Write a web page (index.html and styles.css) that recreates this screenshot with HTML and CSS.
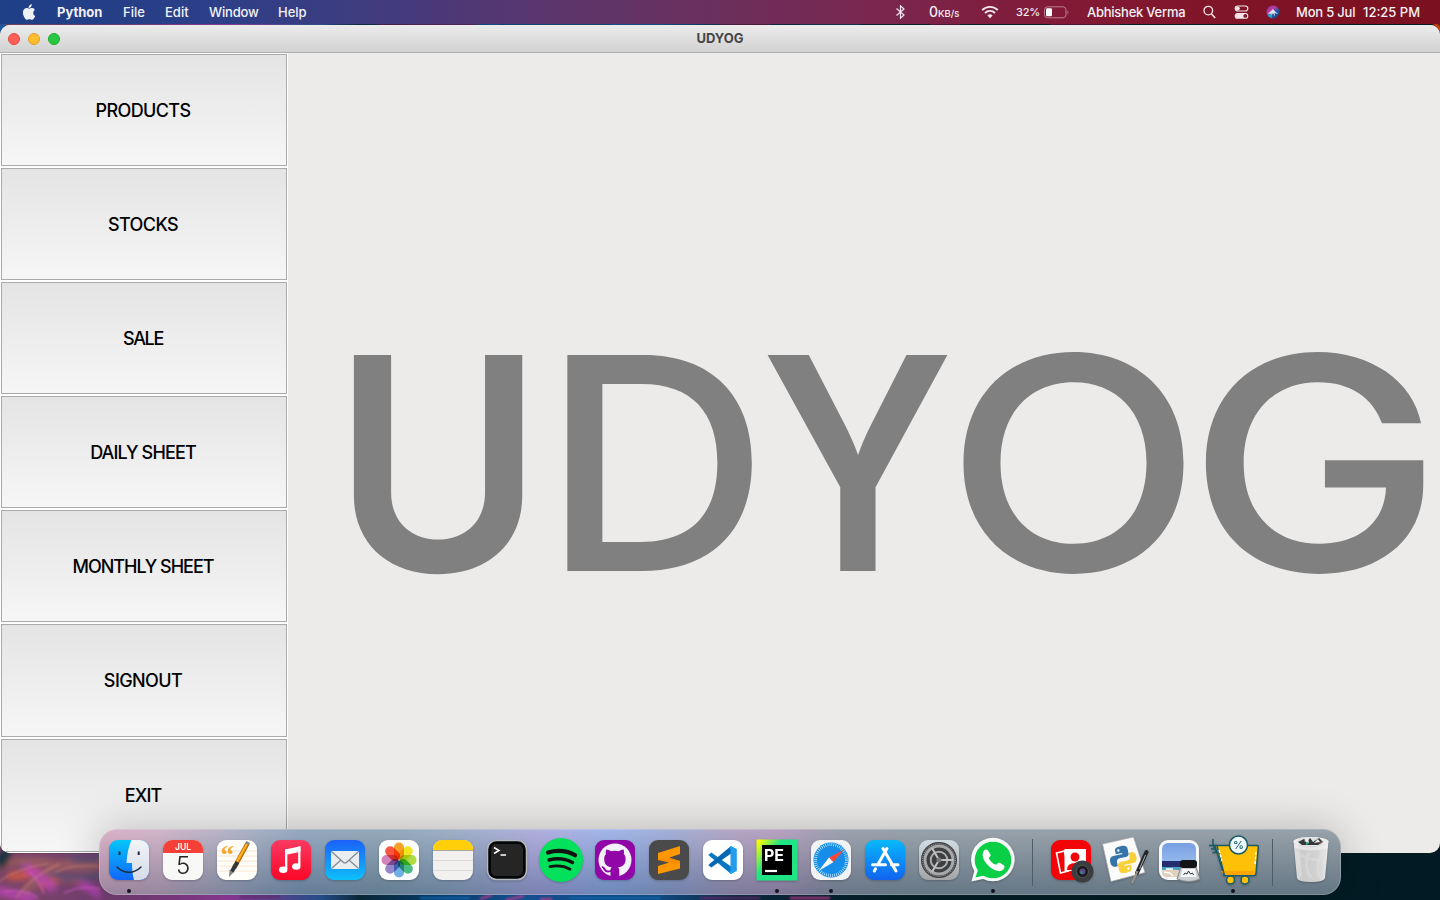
FILE: index.html
```
<!DOCTYPE html>
<html lang="en">
<head>
<meta charset="utf-8">
<title>UDYOG</title>
<link rel="stylesheet" href="styles.css">
</head>
<body>
<div class="desktop">
  <svg class="wallpaper" width="1440" height="900" viewBox="0 0 1440 900">
    <defs><filter id="soft" x="-10%" y="-50%" width="120%" height="200%"><feGaussianBlur stdDeviation="3"/></filter><filter id="fine" x="-10%" y="-50%" width="120%" height="200%"><feGaussianBlur stdDeviation="1"/></filter></defs>
    <g filter="url(#soft)" fill="none" stroke-width="7">
      <path d="M-5 868q30-12 60-4t60-2M20 900q20-34 60-40" stroke="#a8665c" opacity=".7"/>
      <path d="M40 887q20-14 40-6M8 876q20 2 30-8" stroke="#d9593f"/>
      <path d="M-5 890q24 6 40 10M24 866q18 10 30 24M80 884q12 4 20 12" stroke="#b843b5"/>
      <path d="M70 858q16 6 34-2M50 874q20 8 54 0" stroke="#5d5072"/>
      <path d="M-3 866q10-9 8-16" stroke="#07333d" stroke-width="12"/>
    </g>
    <g filter="url(#fine)" fill="none" stroke-width="2">
      <path d="M-2 882q24-16 50-18M16 898q18-24 44-34M56 872q18-8 42-6" stroke="#d88a72" opacity=".4"/>
      <path d="M4 892q18-4 34 6M64 893q16-8 36-4M30 872q10 10 14 22" stroke="#d35bc8" opacity=".5"/>
      <path d="M240 897h40M700 898h60" stroke="#6a2f78"/>
      <path d="M480 899l12-4M506 900l18-4M540 899h12M790 898h40" stroke="#d0409b"/>
      <path d="M570 898h90M420 898h50" stroke="#0d6fbe"/>
      <path d="M378 24h100M720 24h50M930 24h30M1050 24h70" stroke="#80143c"/>
      <path d="M500 24h110M800 24h60" stroke="#0a4068"/>
      <path d="M1434 24l8 8" stroke="#d0440c" stroke-width="6"/>
      <path d="M-2 36l6-12" stroke="#0b5ba8" stroke-width="6"/>
    </g>
  </svg>
  <header class="menubar">
    <nav class="menus">
      <svg class="apple" width="14" height="17" viewBox="0 0 14 17"><path fill="#eef0f6" d="M9.800.3c.1 1-.3 1.900-.9 2.600-.6.700-1.500 1.200-2.300 1.100-.1-.9.300-1.900.9-2.500C8.100.8 9.100.3 9.800.3zM12.800 6c-.1.100-1.600 1-1.600 2.900 0 2.200 1.900 3 2 3 0 .1-.3 1.100-1 2.100-.6.900-1.300 1.800-2.300 1.800s-1.300-.6-2.400-.6c-1.100 0-1.500.6-2.400.6-1 0-1.700-.9-2.400-1.900C1.800 12.600.9 10.600.9 8.700c0-3 1.900-4.600 3.800-4.600 1 0 1.900.7 2.500.7.600 0 1.600-.7 2.800-.7.500 0 2 .1 2.800 1.900z"/></svg>
      <b>Python</b><span class="m-file">File</span><span class="m-edit">Edit</span><span class="m-win">Window</span><span class="m-help">Help</span>
    </nav>
    <div class="status">
      <svg class="s-bt" width="11" height="16" viewBox="0 0 11 16"><path d="M1.500 4.500 9 11 5.500 14.200V1.800L9 5 1.500 11.500" fill="none" stroke="#f0e4ec" stroke-width="1.200"/></svg>
      <span class="s-net"><span class="zero">0</span>KB/s</span>
      <svg class="s-wifi" width="18" height="14" viewBox="0 0 18 14"><g fill="none" stroke="#f4e8ee" stroke-width="1.900"><path d="M1.200 5.100a11 11 0 0 1 15.600 0"/><path d="M4 8a7 7 0 0 1 10 0"/></g><path fill="#f4e8ee" d="M9 13.200 6.400 10.500a3.700 3.700 0 0 1 5.200 0z"/></svg>
      <span class="s-pct">32%</span>
      <svg class="s-bat" width="26" height="13" viewBox="0 0 26 13"><rect x=".5" y=".8" width="21.500" height="11" rx="3" fill="none" stroke="#b98092"/><rect x="2" y="2.300" width="6" height="8" rx="1.300" fill="#fff"/><path d="M23.500 4.500q2 1.800 0 3.600z" fill="#b98092"/></svg>
      <span class="s-user">Abhishek Verma</span>
      <svg class="s-find" width="13" height="14" viewBox="0 0 13 14"><circle cx="5.300" cy="5.600" r="4.300" fill="none" stroke="#f4e6e9" stroke-width="1.300"/><path d="m8.500 9 3.700 4" stroke="#f4e6e9" stroke-width="1.500"/></svg>
      <svg class="s-cc" width="15" height="14" viewBox="0 0 15 14"><rect x="1.200" y="1" width="12.600" height="5" rx="2.500" fill="none" stroke="#f4e6e9" stroke-width="1.200"/><circle cx="3.800" cy="3.500" r="2" fill="#f4e6e9"/><rect x=".7" y="8" width="13.600" height="5.800" rx="2.900" fill="#f4e6e9"/><circle cx="11.300" cy="10.900" r="1.900" fill="#7d1428"/></svg>
      <svg class="s-siri" width="14" height="14" viewBox="0 0 14 14"><defs><linearGradient id="si" x1="0" y1="0" x2="1" y2="1"><stop offset="0" stop-color="#5b38a5"/><stop offset=".35" stop-color="#c8389a"/><stop offset=".6" stop-color="#2b58a0"/><stop offset="1" stop-color="#103c6c"/></linearGradient></defs><circle cx="7" cy="7" r="6.500" fill="url(#si)"/><path d="M2 9q3-3 5-5 1.500 2.500 5.500 5l-4-1 .5 3.500-2-3.500-2 3.500.5-3z" fill="#e9f8ff" opacity=".9"/><path d="M1.300 9.500a6 6 0 0 0 5 3.600L5 9z" fill="#26a6c4"/></svg>
      <span class="s-date">Mon 5 Jul</span><span class="s-time">12:25 PM</span>
    </div>
  </header>

  <main class="window">
    <div class="titlebar">
      <div class="lights"><i class="red"></i><i class="yellow"></i><i class="green"></i></div>
      <h1>UDYOG</h1>
    </div>
    <div class="content">
      <aside class="sidebar">
        <button class="b1">PRODUCTS</button>
        <button class="b2">STOCKS</button>
        <button class="b3">SALE</button>
        <button class="b4">DAILY SHEET</button>
        <button class="b5">MONTHLY SHEET</button>
        <button class="b6">SIGNOUT</button>
        <button class="b7">EXIT</button>
      </aside>
      <section class="hero">
        <svg class="wordmark" width="1152" height="800" viewBox="288 53 1152 800">
          <text y="571"><tspan class="semi" x="333" textLength="210" lengthAdjust="spacingAndGlyphs">U</tspan><tspan x="542" textLength="227" lengthAdjust="spacingAndGlyphs">D</tspan><tspan class="semi" x="761" textLength="193" lengthAdjust="spacingAndGlyphs">Y</tspan><tspan x="945" textLength="257" lengthAdjust="spacingAndGlyphs">O</tspan><tspan x="1187" textLength="256" lengthAdjust="spacingAndGlyphs">G</tspan></text>
        </svg>
      </section>
    </div>
  </main>

  <footer class="dock">
    <svg class="icon" viewBox="0 0 54 54"><defs><linearGradient id="fb" x1="0" y1="0" x2="0" y2="1"><stop offset="0" stop-color="#05c6fb"/><stop offset="1" stop-color="#1166f8"/></linearGradient><linearGradient id="fw" x1="0" y1="0" x2="0" y2="1"><stop offset="0" stop-color="#f2f3f6"/><stop offset="1" stop-color="#d5dde8"/></linearGradient><clipPath id="sq"><rect x="7" y="7" width="40" height="40" rx="9"/></clipPath></defs><g clip-path="url(#sq)"><path fill="url(#fb)" d="M7 7h40v40H7z"/><path fill="url(#fw)" d="M29.500 7c-3 7-4.500 14-5 23h5.500c0 6 .5 12 2 17h16V7z"/></g><path d="M17.500 18.500v3.500M36.700 18.500v3.500" stroke="#1d2b3b" stroke-width="2"/><path d="M15 34c7 7 17 7 24 0" fill="none" stroke="#1d2b3b" stroke-width="1.500" stroke-linecap="round"/></svg>
    <svg class="icon" viewBox="0 0 54 54"><rect x="7" y="7" width="40" height="40" rx="9" fill="#f8f8f7"/><path d="M7 20v-4a9 9 0 0 1 9-9h22a9 9 0 0 1 9 9v4z" fill="#f54038"/><text x="27" y="17" class="cal-m">JUL</text><text x="27" y="41" class="cal-d">5</text></svg>
    <svg class="icon" viewBox="0 0 54 54"><rect x="7" y="7" width="40" height="40" rx="9" fill="#fffefb"/><path d="M7 18h40M7 23h40M7 28h40M7 33h40M7 38h40" stroke="#f8e5cf"/><text x="10.500" y="31" class="quote">“</text><path d="M37.500 10.500 24 35" stroke="#b86b05" stroke-width="4.500"/><path d="M37 11 24 34" stroke="#ffb321" stroke-width="2.300"/><path d="m27.500 29-6 10" stroke="#30363d" stroke-width="4"/><path d="m19.500 37 4 2.500-4.500 4.500z" fill="#888"/><path d="m36 9 3.500 2" stroke="#888" stroke-width="2.500"/></svg>
    <svg class="icon" viewBox="0 0 54 54"><defs><linearGradient id="mu" x1="0" y1="0" x2="0" y2="1"><stop offset="0" stop-color="#fb3a62"/><stop offset="1" stop-color="#fb0727"/></linearGradient></defs><rect x="7" y="7" width="40" height="40" rx="9" fill="url(#mu)"/><path d="m21 16.500 15.500-3.200v5.500L23.500 21.500z" fill="#fff"/><path d="M22.200 16v20M35.300 13.500v19" stroke="#fff" stroke-width="2.300"/><ellipse cx="19.200" cy="36.700" rx="4.200" ry="3.200" fill="#fff"/><ellipse cx="32.300" cy="33.500" rx="4.200" ry="3.200" fill="#fff"/></svg>
    <svg class="icon" viewBox="0 0 54 54"><defs><linearGradient id="ml" x1="0" y1="0" x2="0" y2="1"><stop offset="0" stop-color="#1c61f8"/><stop offset="1" stop-color="#0dc0fb"/></linearGradient></defs><rect x="7" y="7" width="40" height="40" rx="9" fill="url(#ml)"/><rect x="13" y="18" width="28" height="18" rx="2" fill="#e9edf0"/><path d="m14 19 11 10q2 2 4 0l11-10M14 35l9-8m17 8-9-8" fill="none" stroke="#7b8794" stroke-width="1.100"/></svg>
    <svg class="icon photos" viewBox="0 0 54 54"><rect x="7" y="7" width="40" height="40" rx="9" fill="#fdfdfd"/><rect x="22" y="9.500" width="10" height="17" rx="5" fill="#fb980e"/><rect x="22" y="9.500" width="10" height="17" rx="5" fill="#f1e509" transform="rotate(45 27 27)"/><rect x="22" y="9.500" width="10" height="17" rx="5" fill="#a5db2b" transform="rotate(90 27 27)"/><rect x="22" y="9.500" width="10" height="17" rx="5" fill="#37b878" transform="rotate(135 27 27)"/><rect x="22" y="9.500" width="10" height="17" rx="5" fill="#60a9e1" transform="rotate(180 27 27)"/><rect x="22" y="9.500" width="10" height="17" rx="5" fill="#8a7ac3" transform="rotate(225 27 27)"/><rect x="22" y="9.500" width="10" height="17" rx="5" fill="#ce78b4" transform="rotate(270 27 27)"/><rect x="22" y="9.500" width="10" height="17" rx="5" fill="#fb432e" transform="rotate(315 27 27)"/></svg>
    <svg class="icon" viewBox="0 0 54 54"><rect x="7" y="7" width="40" height="40" rx="9" fill="#f3f1ef"/><path d="M7 17v-1a9 9 0 0 1 9-9h22a9 9 0 0 1 9 9v1z" fill="#ffcf0a"/><path d="M7 17.500h40" stroke="#aaa69e"/><path d="M7 27.500h40M7 37.500h40" stroke="#dcd9d6"/></svg>
    <svg class="icon" viewBox="0 0 54 54"><rect x="7.500" y="7.500" width="39" height="39" rx="9" fill="#050505" stroke="#b3b9bd" stroke-width="1.500"/><rect x="11" y="11" width="32" height="32" rx="5" fill="#252525"/><path d="m14 14.500 5 3-5 3M20.500 22h5.500" fill="none" stroke="#fff" stroke-width="1.500"/></svg>
    <svg class="icon" viewBox="0 0 54 54"><circle cx="27" cy="27" r="22" fill="#02e15b"/><g fill="none" stroke="#10130f" stroke-linecap="round"><path d="M14 19.500c9-2.500 19-1.700 27 2.700" stroke-width="4.200"/><path d="M15 27c8-2 16.500-1.200 23.500 2.500" stroke-width="3.500"/><path d="M16 33.700c7-1.500 14-.8 20 2.500" stroke-width="2.800"/></g></svg>
    <svg class="icon" viewBox="0 0 54 54"><rect x="7" y="7" width="40" height="40" rx="9" fill="#9106a6"/><circle cx="27" cy="27" r="16.500" fill="#f2f0f8"/><path d="M22.500 44v-5q-5 1.500-7-2.500c-1-2-2-2-2-3 3-1 4 4 6 4q2 .3 3-.5c0-1 .5-2 1.200-2.700-5-.6-7.500-3.300-7.500-8.300 0-2 .5-3.700 1.800-5-.5-1.500-.3-3.300.3-4.500 1.500 0 3.200.8 4.600 1.800q4-.9 8 0c1.500-1 3-1.800 4.600-1.800.6 1.400.7 3 .3 4.500 1.300 1.300 1.800 3 1.800 5 0 5-2.500 7.700-7.500 8.300q1.200 1.300 1.200 3.500V44z" fill="#9106a6"/></svg>
    <svg class="icon" viewBox="0 0 54 54"><rect x="7" y="7" width="40" height="40" rx="9" fill="#4a4a4a"/><path d="m16 20 22-7v8l-11 3.800L38 28v7.500L16 41v-8l11-3.500L16 27z" fill="#ff9800"/><path d="m16 26 11-1.200L38 28v3l-5 1-6-2.500z" fill="#f38a00" opacity=".7"/></svg>
    <svg class="icon" viewBox="0 0 54 54"><rect x="7" y="7" width="40" height="40" rx="9" fill="#fff"/><path d="m12.300 22 3-2.500L35 33.500V41z" fill="#0878c5"/><path d="m12.300 32 3 2.500L35 20.500V13z" fill="#0667b3"/><path d="m35 13 5.800 3v22L35 41l-2-1.500 1.500-2v-21l-1.500-2z" fill="#249ded"/></svg>
    <svg class="icon" viewBox="0 0 54 54"><defs><linearGradient id="pe" x1="0" y1="0" x2=".65" y2=".45"><stop offset=".1" stop-color="#f6fb05"/><stop offset=".65" stop-color="#20e585"/></linearGradient></defs><path fill="url(#pe)" d="M6.500 6.500h41v41h-41z"/><path d="M12 12h30v30H12z"/><text x="14" y="27.500" class="pe">PE</text><path d="M15 38h12" stroke="#fff" stroke-width="2.200"/></svg>
    <svg class="icon" viewBox="0 0 54 54"><rect x="7" y="7" width="40" height="40" rx="9" fill="#f2f3f4"/><circle cx="27" cy="27" r="17.500" fill="#168de9"/><circle cx="27" cy="27" r="15.500" fill="none" stroke="#c6edff" stroke-width="3" stroke-dasharray=".7 1.330"/><path d="M40 16.500 25 24.500l4.300 4.700z" fill="#fb4638"/><path d="M14.500 38 25 24.500l4.300 4.700z" fill="#f7f8fa"/></svg>
    <svg class="icon" viewBox="0 0 54 54"><defs><linearGradient id="as" x1="0" y1="0" x2="0" y2="1"><stop offset="0" stop-color="#07b9fb"/><stop offset="1" stop-color="#1263f0"/></linearGradient></defs><rect x="7" y="7" width="40" height="40" rx="9" fill="url(#as)"/><g stroke="#fff" stroke-width="3" stroke-linecap="round"><path d="M29 15.500 19.500 32M25 15.500 38 38M14.500 31.800h13M33.500 31.800h6.500M17.500 35.800l-1.200 2.200"/></g></svg>
    <svg class="icon" viewBox="0 0 54 54"><defs><linearGradient id="sp" x1="0" y1="0" x2="0" y2="1"><stop offset="0" stop-color="#d0dce3"/><stop offset="1" stop-color="#a3a4a5"/></linearGradient></defs><rect x="7" y="7" width="40" height="40" rx="9" fill="url(#sp)"/><circle cx="27" cy="27" r="18" fill="#3d3f41"/><circle cx="27" cy="27" r="14" fill="none" stroke="#a6a8a9" stroke-width="3"/><circle cx="27" cy="27" r="16.300" fill="none" stroke="#909293" stroke-width="1.300" stroke-dasharray="1 1"/><circle cx="27" cy="27" r="8.300" fill="none" stroke="#aaacad" stroke-width="2"/><path d="M27 27h14M27 27l-7-12M27 27l-7 12" stroke="#c0c2c3" stroke-width="2"/><circle cx="27" cy="27" r="2.500" fill="#77797a"/></svg>
    <svg class="icon" viewBox="0 0 54 54"><path d="M5.500 48.500 8.300 38A21.800 21.800 0 1 1 17 46z" fill="#f7f8f8"/><circle cx="27" cy="27" r="18.300" fill="#08cf45"/><path d="m9.500 44.500 3-9 6.500 6.700z" fill="#08cf45"/><path d="M18 17.500c1-1.500 3-1.500 4 0l2.500 4c.7 1.200-.8 2.500-1.800 3.800 1.500 3 4 5.300 7 6.500 1.500-1.200 2.500-2.600 4-2l4 2.500c1.500 1 1 3-.5 4.300-3 2.700-7.500 1.700-12-1.500-4.500-3.200-8-8-8.500-12-.2-2.200.3-4 1.300-5.600z" fill="#fff"/></svg>
    <i class="sep"></i>
    <svg class="icon" viewBox="0 0 54 54"><rect x="7" y="7" width="40" height="40" rx="9" fill="#f30409"/><path d="m12.500 20 8-2 4 20-8 2z" fill="#f30409" stroke="#fff" stroke-width="1.600"/><path d="M20.500 16h21.500v22H20.500z" fill="#fff"/><circle cx="31" cy="24" r="4.500" fill="#f30409"/><path d="M23 37q0-7 8-7t8 7z" fill="#f30409"/><circle cx="38.500" cy="38.500" r="11" fill="#3b3d3f"/><circle cx="38.500" cy="38.500" r="6" fill="#17191c" stroke="#555"/><circle cx="38.500" cy="38.500" r="3" fill="#5e4a85"/><circle cx="37.500" cy="39.500" r="1.300" fill="#258f8c"/></svg>
    <svg class="icon" viewBox="0 0 54 54"><path d="m4.500 11 31-7L47 39.500 13 48.500z" fill="#fbfbfb" stroke="#aaa" stroke-width=".7"/><g transform="rotate(-12 25 26) translate(1.500 1.600) scale(.94)"><path d="M25 12c-5 0-6.500 1.500-6.500 4v3.500h7v1.200H15.500c-3 0-4.500 2.300-4.500 5.800s1.500 5.800 4.500 5.800H18v-4c0-2.300 1.500-3.800 3.500-3.800h7c2 0 3.500-1.300 3.500-3V16c0-2.500-2-4-7-4z" fill="#3675aa"/><path d="M25.500 41c5 0 6.500-1.500 6.500-4v-3.500h-7v-1.200h10c3 0 4.500-2.300 4.500-5.800S38 20.700 35 20.700h-2.500v4c0 2.300-1.500 3.800-3.500 3.800h-7c-2 0-3.500 1.300-3.500 3V37c0 2.500 2 4 7 4z" fill="#f9d03a"/><circle cx="22" cy="16" r="1.300" fill="#fff"/><circle cx="28.500" cy="37" r="1.300" fill="#fff"/></g><path d="M48.500 19 39 40" stroke="#24262a" stroke-width="4" stroke-linecap="round"/><path d="m47.500 22-6 14" stroke="#aeb3b9"/><path d="m39.500 38-5.500 12" stroke="#99978c" stroke-width="2"/></svg>
    <svg class="icon" viewBox="0 0 54 54"><defs><linearGradient id="pv" x1="0" y1="0" x2="0" y2="1"><stop offset="0" stop-color="#789ee2"/><stop offset="1" stop-color="#abcdf2"/></linearGradient></defs><rect x="7" y="7" width="40" height="40" rx="9" fill="#f7f8f9"/><rect x="10" y="10" width="34" height="34" rx="6" fill="url(#pv)"/><path d="M10 28h34v6H10z" fill="#252d70"/><path d="M10 34h34v3H10z" fill="#48a1bf"/><path d="M10 37q14-2 34 4v3H16q-6 0-6-4z" fill="#ded0bb"/><path d="M12 39l6 1 3 3M14 36h7" stroke="#fff" stroke-width="1.300" fill="none"/><path d="M29 34h15l4 12q-11 5-23 0z" fill="#c9cdd0" stroke="#85898d"/><path d="M30 36h13l1.500 8h-16z" fill="#f6f7f7"/><path d="m31.500 42 1.500-2 2 1 1.500-3 2 3 2-1 1 2" fill="none" stroke="#303438"/><rect x="28" y="27" width="17" height="8" rx="3" fill="#121416"/></svg>
    <svg class="icon" viewBox="0 0 54 54"><path d="M9 12.500h42q1.500 0 1.300 2L50 40q0 2.500-2 2.500H18z" fill="#fec107" stroke="#175b68" stroke-width="1.500"/><path d="m15 38 3 4h30l1.500-4z" fill="#fea600"/><path d="M3 12.500h8l7.500 30M7 6v6l4 8M5 16h5M6.500 19.500h5" fill="none" stroke="#175b68" stroke-width="1.400"/><path d="m13 17 3 11M50 19l-1 12" stroke="#fff" stroke-width="1.400" stroke-dasharray="3 1.500"/><g fill="#fec107" stroke="#175b68" stroke-width="1.500"><circle cx="24.500" cy="47" r="4"/><circle cx="39" cy="47" r="4"/></g><circle cx="32.500" cy="12" r="9" fill="#eefafa" stroke="#175b68" stroke-width="1.500"/><text x="32.500" y="16" class="cart-pct">%</text></svg>
    <i class="sep"></i>
    <svg class="icon" viewBox="0 0 54 54"><defs><linearGradient id="tr" x1="0" y1="0" x2="1" y2="0"><stop offset="0" stop-color="#e2e2e2"/><stop offset=".25" stop-color="#cbcbcb"/><stop offset=".7" stop-color="#d2d2d3"/><stop offset="1" stop-color="#ececec"/></linearGradient></defs><path d="M9.500 8 13 45q1 4 14 4t14-4l3.500-37z" fill="url(#tr)"/><ellipse cx="27" cy="8.500" rx="17.500" ry="4.500" fill="#eceded"/><path d="m13 8 5-4 5 3 4-2 6-1 8 4-5 4H18z" fill="#dfe2e3"/><path d="m14 9 6-3 3 3 3-4 3 4 6-4 4 4-5 3H18z" fill="#34383a"/><path d="m20 8 4-2 1 4zM30 10l4-4 2 3z" fill="#f0f2f2"/><path d="m22 9 3 1-3 2z" fill="#39b98a"/><path d="m35 10 3-2-1 3z" fill="#b4583e"/><path d="M10 11q17 6 34 0l-.4 4q-16 5-33 0z" fill="#f4f4f4" opacity=".6"/><path d="m14 19 3 25M25 19q-6 14 2 26M39 18q-8 12-4 26M17 22q8 6 18 4" fill="none" stroke="#eff0f1" stroke-width="3" opacity=".25"/></svg>
    <i class="dot d1"></i><i class="dot d2"></i><i class="dot d3"></i><i class="dot d4"></i><i class="dot d5"></i>
  </footer>
</div>
</body>
</html>
```
FILE: styles.css
```
* { box-sizing: border-box; }
body { margin: 0; font-family: Inter, "Liberation Sans", sans-serif; }
.desktop {
  position: relative;
  width: 1440px;
  height: 900px;
  overflow: hidden;
  display: flex;
  flex-direction: column;
  background: linear-gradient(90deg, #7b4466 0, #70406f 100px, #953d9e 230px, #2a5799 320px, #0b2b3c 360px, #07406f 430px, #1758a0 520px, #12528f 660px, #0a2b42 740px, #032027 900px, #001b23 1440px);
}
.wallpaper { position: absolute; left: 0; top: 0; }
.menubar {
  position: relative;
  height: 24px;
  margin-bottom: 1px;
  display: flex;
  justify-content: space-between;
  color: #f3f1f6;
  font-size: 13px;
  font-weight: 500;
  white-space: nowrap;
  background: linear-gradient(90deg, #1e3f86 0, #2b3f88 200px, #3e3c80 360px, #5a366e 540px, #683260 680px, #7a264e 880px, #821a36 1060px, #801427 1240px, #7b1020 1440px);
}
.menus, .status { display: flex; align-items: center; }
.menus { padding-left: 22px; }
.apple { margin-right: 21px; }
.menus b { width: 66px; font-weight: 700; }
.m-file { width: 42px; }
.m-edit { width: 44px; }
.m-win { width: 69px; letter-spacing: -.15px; }
.status { padding-right: 19px; }
.s-bt { margin-right: 23px; }
.s-net { font-size: 9.500px; width: 52px; padding-bottom: 1px; }
.zero { font-size: 14px; }
.s-wifi { margin-right: 17px; }
.s-pct { font-size: 11px; width: 28px; letter-spacing: -.2px; }
.s-bat { margin-right: 17px; }
.s-user { width: 116px; letter-spacing: -.25px; }
.s-find { margin-right: 18px; }
.s-cc { margin-right: 17px; }
.s-siri { margin-right: 16px; }
.s-date { width: 67px; letter-spacing: -.2px; }
.s-time { width: 58px; }
.window {
  position: relative;
  height: 828px;
  display: flex;
  flex-direction: column;
  background: #ecebe9;
  border-radius: 10px;
  overflow: hidden;
  box-shadow: 0 0 1px #222;
}
.titlebar {
  position: relative;
  height: 28px;
  display: flex;
  align-items: center;
  justify-content: center;
  background: linear-gradient(#ececec, #d2d2d2);
  border-bottom: 1px solid #acacac;
}
.titlebar h1 { margin: 0; font-size: 13px; line-height: 16px; padding-bottom: 1px; font-weight: 700; color: #454545; }
.lights { position: absolute; left: 8px; top: 8px; display: flex; gap: 8px; }
.lights i { width: 12px; height: 12px; border-radius: 50%; border: 1px solid #e2463f; background: #fe5f57; }
.lights .yellow { background: #febc2e; border-color: #dea123; }
.lights .green { background: #28c840; border-color: #1aab29; }
.content { flex: 1; display: flex; }
.sidebar {
  width: 288px;
  height: 800px;
  padding: 1px;
  background: #fff;
  display: grid;
  grid-template-rows: repeat(5, 112px) 113px 113px;
  row-gap: 2px;
}
.sidebar button {
  margin: 0;
  padding: 1px 2px 0 0;
  border: 1px solid #a9abab;
  background: linear-gradient(#e4e4e4, #f6f6f6);
  font: 500 18px Inter, "Liberation Sans", sans-serif;
  letter-spacing: -.6px;
  color: #000;
}
.sidebar .b3 { letter-spacing: -1.300px; }
.sidebar .b4 { letter-spacing: -.85px; }
.sidebar .b5 { letter-spacing: -1px; }
.sidebar .b6, .sidebar .b7 { padding: 0 2px 1px 0; }
.sidebar .b7 { letter-spacing: -.9px; }
.hero { flex: 1; display: flex; }
.wordmark text { font: 500 297px Inter, "Liberation Sans", sans-serif; fill: #808080; }
.wordmark .semi { font-weight: 600; }
.dock {
  position: absolute;
  left: 99px;
  top: 829px;
  width: 1242px;
  height: 66px;
  padding: 4px 3px;
  display: flex;
  border-radius: 18px;
  background:
    linear-gradient(rgba(255,255,255,.17), rgba(30,60,85,.3)),
    linear-gradient(90deg, #d3a3bc 0, #c8a6bd 60px, #a5a5bb 130px, #8298b5 200px, #8098ab 280px, #8b9fba 350px, #a29fd8 440px, #8ea8e4 510px, #929fcf 570px, #a596b9 630px, #a98fb4 680px, #8a8f9f 740px, #84909a 800px, #838f98 1242px);
  box-shadow: inset 0 0 0 1px rgba(255,255,255,.2), 0 0 44px rgba(0,0,0,.24);
}
.icon { width: 54px; height: 54px; flex: none; overflow: visible; filter: drop-shadow(0 1px 1px rgba(0,0,0,.22)); }
.photos rect + rect { mix-blend-mode: multiply; opacity: .9; }
.sep { width: 24px; display: flex; justify-content: center; }
.sep::after { content: ""; width: 1px; height: 47px; margin-top: 6px; background: #4e5c67; }
.dot { position: absolute; top: 60px; width: 4px; height: 4px; border-radius: 50%; background: #13131d; }
.d1 { left: 28px; } .d2 { left: 676px; } .d3 { left: 730px; } .d4 { left: 892px; } .d5 { left: 1132px; }
.cal-m { font-size: 8.500px; font-weight: 600; fill: #fff; text-anchor: middle; }
.cal-d { font-size: 24px; font-weight: 300; fill: #252525; text-anchor: middle; }
.quote { font: 700 27px "Liberation Serif", serif; fill: #f7a52b; }
.pe { font-size: 16px; font-weight: 700; fill: #fff; }
.cart-pct { font-size: 11px; font-weight: 500; fill: #175b68; text-anchor: middle; }
```
